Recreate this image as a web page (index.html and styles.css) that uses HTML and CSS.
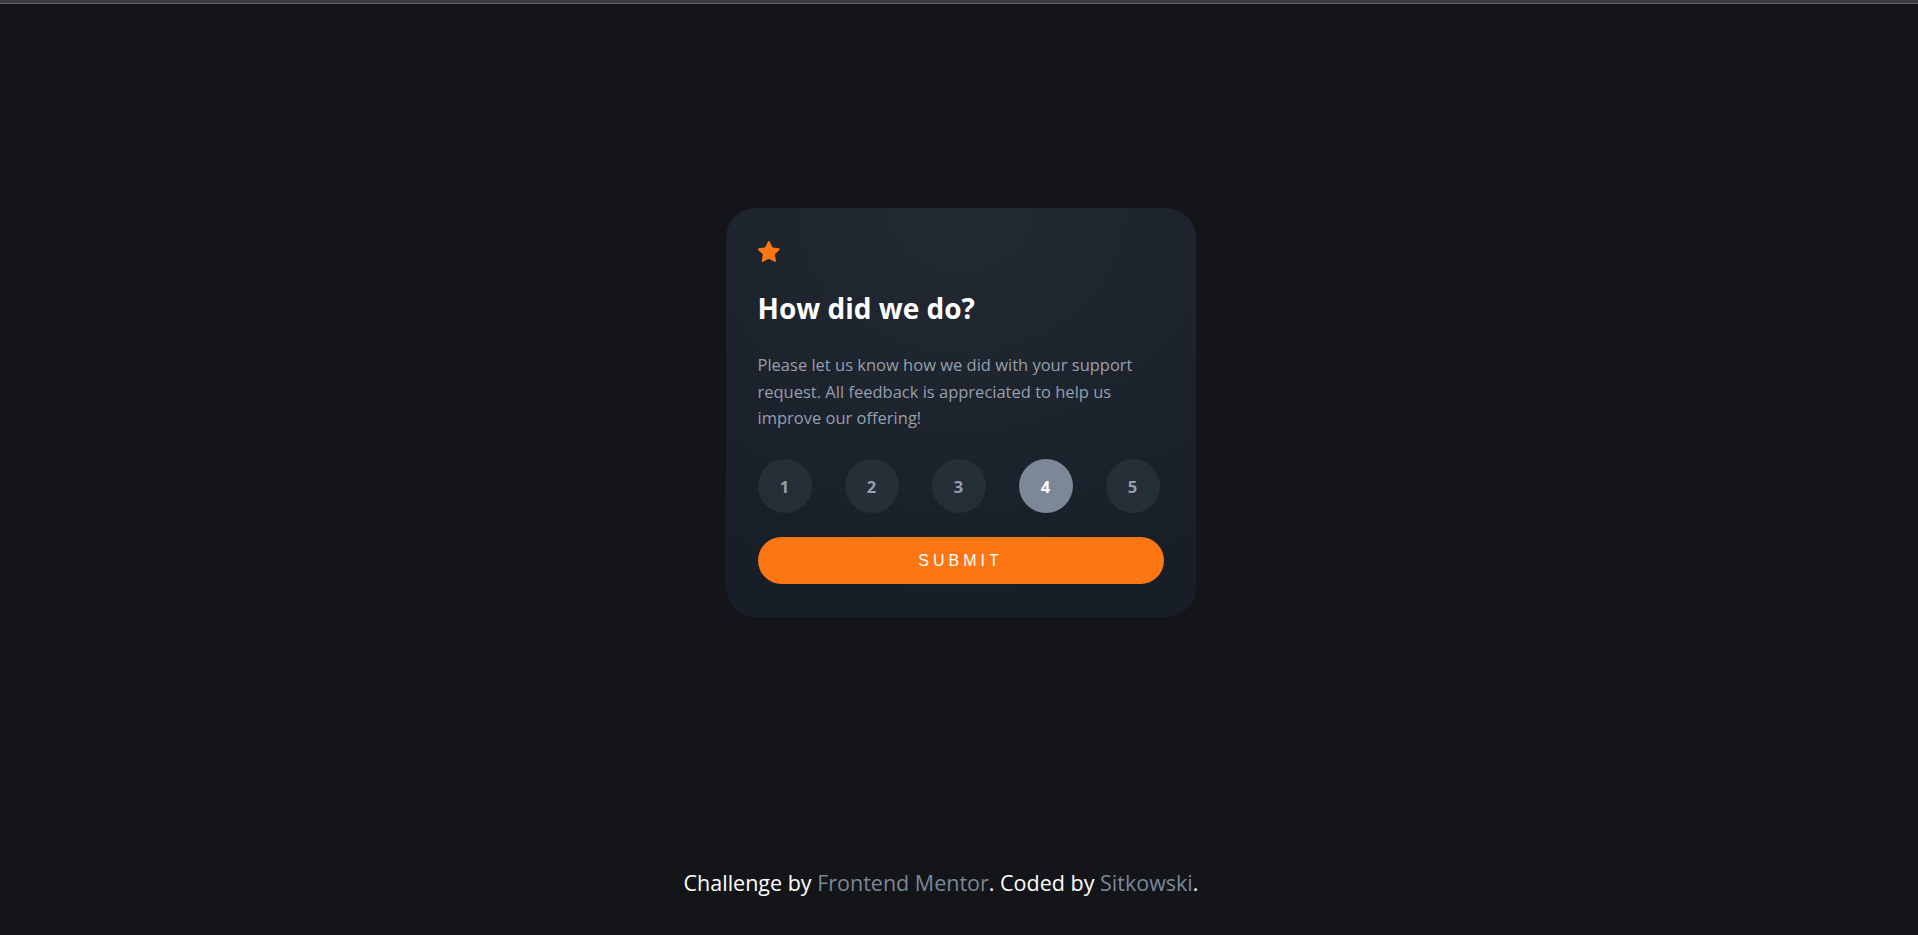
FILE: index.html
```html
<!DOCTYPE html>
<html lang="en">
<head>
<meta charset="utf-8">
<title>Interactive rating component</title>
<link rel="stylesheet" href="styles.css">
</head>
<body>
<div class="topbar"></div>
<main class="main">
  <section class="card">
    <div class="star">
      <svg width="22" height="21" viewBox="0 0 17 16" xmlns="http://www.w3.org/2000/svg"><path d="m9.067.43 1.99 4.031c.112.228.33.386.58.422l4.45.647a.772.772 0 0 1 .427 1.316l-3.22 3.138a.773.773 0 0 0-.222.683l.76 4.431a.772.772 0 0 1-1.12.813l-3.980-2.092a.773.773 0 0 0-.718 0l-3.98 2.092a.772.772 0 0 1-1.119-.813l.76-4.431a.77.77 0 0 0-.222-.683L.213 6.846A.772.772 0 0 1 .64 5.530l4.45-.647a.772.772 0 0 0 .58-.422L7.66.43a.774.774 0 0 1 1.407 0Z" fill="#FC7614"/></svg>
    </div>
    <h1 class="title">How did we do?</h1>
    <p class="text">Please let us know how we did with your support request. All feedback is appreciated to help us improve our offering!</p>
    <div class="ratings">
      <button class="rate">1</button>
      <button class="rate">2</button>
      <button class="rate">3</button>
      <button class="rate rate-active">4</button>
      <button class="rate">5</button>
    </div>
    <button class="submit">SUBMIT</button>
  </section>
</main>
<footer class="footer">Challenge by <a class="link">Frontend Mentor</a>. Coded by <a class="link">Sitkowski</a>.</footer>
</body>
</html>
```
FILE: styles.css
```css
* { box-sizing: border-box; }
html, body { margin: 0; padding: 0; }
body {
  background: #131518;
  min-height: 100vh;
  display: flex;
  flex-direction: column;
  font-family: "Open Sans", "Noto Sans", sans-serif;
}
.topbar {
  height: 4px;
  background: #3c3c40;
  border-bottom: 1px solid #66666a;
  flex: none;
}
.main {
  flex: 1;
  display: flex;
  align-items: center;
  justify-content: center;
}
.card {
  width: 470px;
  height: 409px;
  padding: 33px 32px 33px 32px;
  border-radius: 30px;
  background: radial-gradient(98.96% 98.96% at 50% 0%, #232a34 0%, #181e27 100%);
  margin-left: 3px;
}
.star {
  height: 21px;
  display: flex;
}
.title {
  margin: 28px 0 0;
  color: #ffffff;
  font-size: 28px;
  font-weight: 700;
  line-height: 36px;
}
.text {
  margin: 26px 0 0;
  color: #969fad;
  font-size: 16.5px;
  line-height: 26.5px;
}
.ratings {
  margin-top: 27.5px;
  display: flex;
  justify-content: space-between;
  padding-right: 4px;
}
.rate {
  width: 54px;
  height: 54px;
  border-radius: 50%;
  border: none;
  background: #262e38;
  color: #969fad;
  font-family: inherit;
  font-weight: 700;
  font-size: 16.5px;
  padding: 0;
}
.rate-active {
  background: #7c8798;
  color: #ffffff;
}
.submit {
  display: block;
  width: 100%;
  height: 47px;
  margin-top: 24px;
  border: none;
  border-radius: 24px;
  background: #fc7614;
  color: #ffffff;
  font-family: "Liberation Sans", Arial, sans-serif;
  font-size: 16px;
  letter-spacing: 4px;
  padding: 0;
}
.footer {
  flex: none;
  height: 114px;
  padding: 49px 36px 0 0;
  text-align: center;
  color: #ffffff;
  font-size: 21.5px;
  line-height: 26px;
}
.link {
  color: #7c8798;
}
```
